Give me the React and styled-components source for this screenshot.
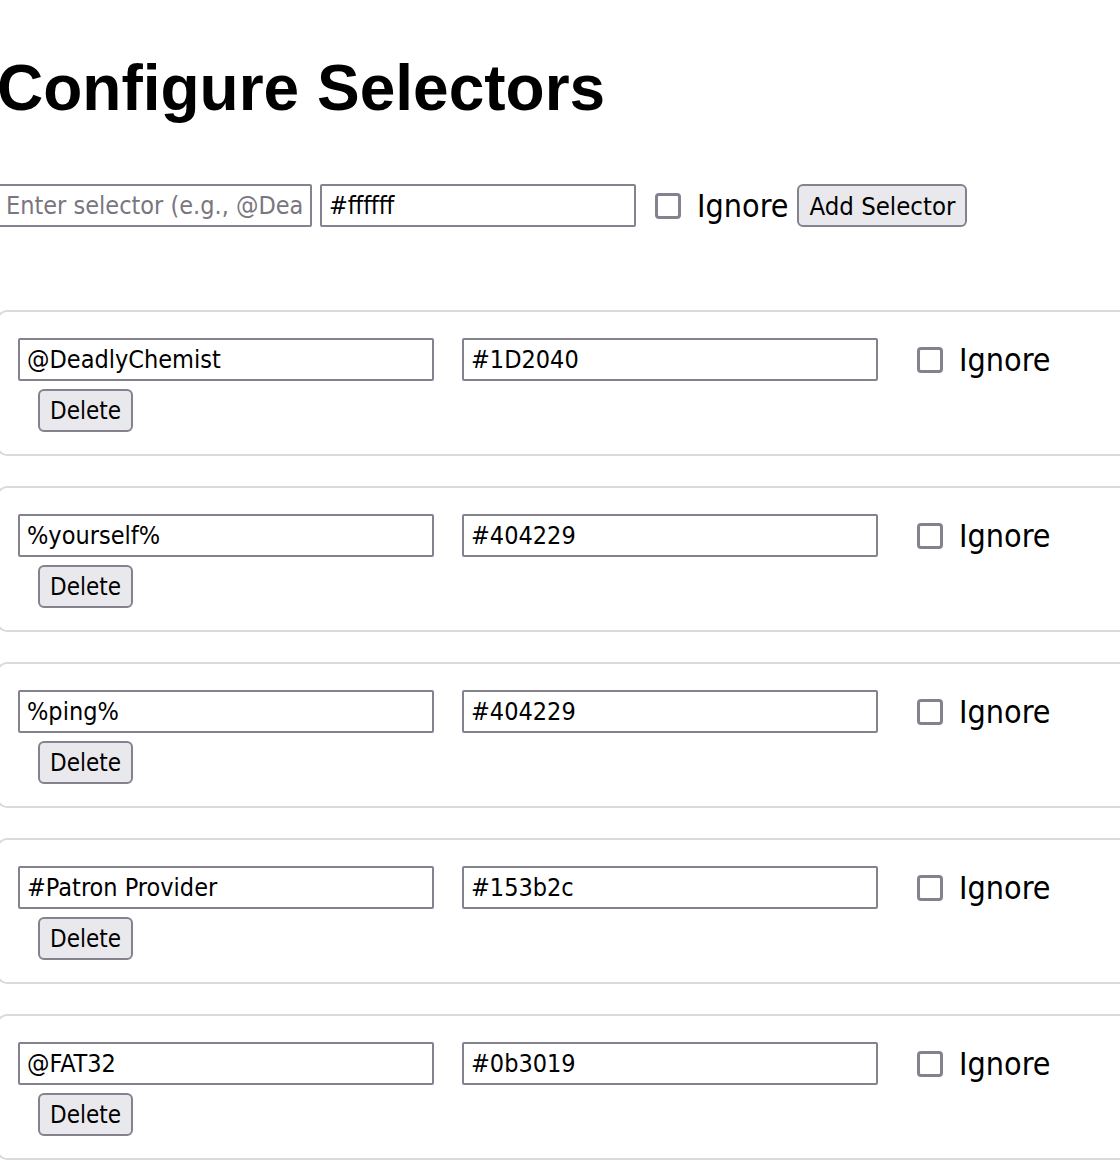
import React, { useState } from "react";
import styled, { createGlobalStyle } from "styled-components";

const GlobalStyle = createGlobalStyle`
  html, body {
    margin: 0;
    padding: 0;
    overflow: hidden;
    background: #ffffff;
    color: #000000;
    font-family: "DejaVu Sans Condensed", "DejaVu Sans", sans-serif;
  }
`;

const Page = styled.div`
  margin-left: -3px;
`;

const Title = styled.h1`
  margin: 52px 0 0;
  font-family: "Liberation Sans", Arial, sans-serif;
  font-weight: bold;
  font-size: 64px;
  line-height: 72px;
`;

const AddRow = styled.div`
  display: flex;
  align-items: center;
  margin-top: 60px;
`;

const TextInput = styled.input`
  box-sizing: border-box;
  width: ${(p) => p.$width}px;
  height: 43px;
  margin: 0 0 0 ${(p) => p.$gap || 0}px;
  padding: 0 7px;
  border: 2px solid #85828f;
  border-radius: 2px;
  background: #ffffff;
  color: #000000;
  font-family: "DejaVu Sans Condensed", "DejaVu Sans", sans-serif;
  font-size: 25px;
  outline: none;

  &::placeholder {
    color: #7a7680;
  }
`;

const CheckLabel = styled.label`
  display: flex;
  align-items: center;
  gap: 16px;
  margin-left: ${(p) => p.$gap}px;
  font-family: "DejaVu Sans Condensed", "DejaVu Sans", sans-serif;
  font-size: 32px;
  line-height: 40px;
`;

const Box = styled.input.attrs({ type: "checkbox" })`
  appearance: none;
  box-sizing: border-box;
  width: 26px;
  height: 26px;
  margin: 0;
  border: 3px solid #85828f;
  border-radius: 4px;
  background: #ffffff;
`;

const Button = styled.button`
  box-sizing: border-box;
  height: 43px;
  margin: ${(p) => p.$margin || "0"};
  padding: 0 10px;
  border: 2px solid #85828f;
  border-radius: 6px;
  background: #e9e9ed;
  color: #000000;
  font-family: "DejaVu Sans Condensed", "DejaVu Sans", sans-serif;
  font-size: ${(p) => p.$size || 24}px;
`;

const List = styled.div`
  margin-top: 83px;
`;

const Card = styled.div`
  box-sizing: border-box;
  width: 1160px;
  margin-bottom: 30px;
  padding: 26px 19px 22px;
  border: 2px solid #dadada;
  border-radius: 10px;
`;

const CardRow = styled.div`
  display: flex;
  align-items: center;
`;

const initial = [
  { selector: "@DeadlyChemist", color: "#1D2040" },
  { selector: "%yourself%", color: "#404229" },
  { selector: "%ping%", color: "#404229" },
  { selector: "#Patron Provider", color: "#153b2c" },
  { selector: "@FAT32", color: "#0b3019" },
];

export default function App() {
  const [items, setItems] = useState(initial);

  const remove = (i) => setItems(items.filter((_, idx) => idx !== i));

  return (
    <Page>
      <GlobalStyle />
      <Title>Configure Selectors</Title>
      <AddRow>
        <TextInput $width={315} placeholder="Enter selector (e.g., @DeadlyChemist)" />
        <TextInput $width={316} $gap={8} defaultValue="#ffffff" />
        <CheckLabel $gap={19}>
          <Box />
          Ignore
        </CheckLabel>
        <Button $margin="0 0 0 9px" $size={25.5}>
          Add Selector
        </Button>
      </AddRow>
      <List>
        {items.map((item, i) => (
          <Card key={item.selector}>
            <CardRow>
              <TextInput $width={416} defaultValue={item.selector} />
              <TextInput $width={416} $gap={28} defaultValue={item.color} />
              <CheckLabel $gap={39}>
                <Box />
                Ignore
              </CheckLabel>
            </CardRow>
            <Button $margin="8px 0 0 20px" onClick={() => remove(i)}>
              Delete
            </Button>
          </Card>
        ))}
      </List>
    </Page>
  );
}
